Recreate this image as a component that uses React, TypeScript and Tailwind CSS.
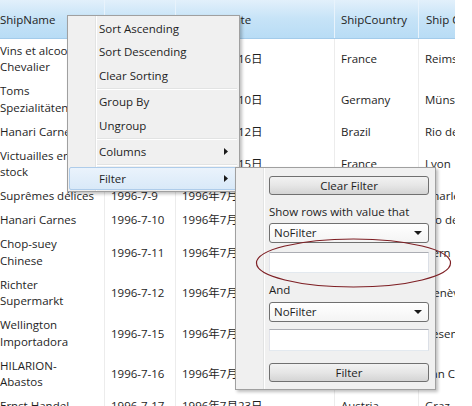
import React from "react";

type Row = {
  name: string[];
  order: string;
  shipped: string;
  country: string;
  city: string;
};

const rows: Row[] = [
  { name: ["Vins et alcools", "Chevalier"], order: "1996-7-4", shipped: "1996年7月16日", country: "France", city: "Reims" },
  { name: ["Toms", "Spezialitäten"], order: "1996-7-5", shipped: "1996年7月10日", country: "Germany", city: "Münster" },
  { name: ["Hanari Carnes"], order: "1996-7-8", shipped: "1996年7月12日", country: "Brazil", city: "Rio de Janeiro" },
  { name: ["Victuailles en", "stock"], order: "1996-7-8", shipped: "1996年7月15日", country: "France", city: "Lyon" },
  { name: ["Suprêmes délices"], order: "1996-7-9", shipped: "1996年7月11日", country: "Belgium", city: "Charleroi" },
  { name: ["Hanari Carnes"], order: "1996-7-10", shipped: "1996年7月16日", country: "Brazil", city: "Rio de Janeiro" },
  { name: ["Chop-suey", "Chinese"], order: "1996-7-11", shipped: "1996年7月23日", country: "Switzerland", city: "Bern" },
  { name: ["Richter", "Supermarkt"], order: "1996-7-12", shipped: "1996年7月15日", country: "Switzerland", city: "Genève" },
  { name: ["Wellington", "Importadora"], order: "1996-7-15", shipped: "1996年7月17日", country: "Brazil", city: "Resende" },
  { name: ["HILARION-", "Abastos"], order: "1996-7-16", shipped: "1996年7月22日", country: "Venezuela", city: "San Cristóbal" },
  { name: ["Ernst Handel"], order: "1996-7-17", shipped: "1996年7月23日", country: "Austria", city: "Graz" },
];

function Arrow() {
  return (
    <svg width="4" height="7" viewBox="0 0 4 7" className="block">
      <path d="M0 0 L4 3.5 L0 7 Z" fill="#1a1a1a" />
    </svg>
  );
}

function DownArrow() {
  return (
    <svg width="8" height="4" viewBox="0 0 8 4" className="block">
      <path d="M0 0 L8 0 L4 4 Z" fill="#1a1a1a" />
    </svg>
  );
}

function MenuItem({ label, sub, active }: { label: string; sub?: boolean; active?: boolean }) {
  return (
    <div className="relative h-[23.5px] flex items-center">
      {active && (
        <div className="absolute left-px right-[2px] top-0 bottom-0 rounded-[2px] border border-[#aeccea] bg-gradient-to-b from-[#eaf3fc] to-[#d9e9f8]" />
      )}
      <div className="relative pl-[31px] flex-1">{label}</div>
      {sub && (
        <div className="relative mr-[11px]">
          <Arrow />
        </div>
      )}
    </div>
  );
}

function Sep() {
  return (
    <div className="h-[3px] flex flex-col justify-center pl-[28px] pr-[2px]">
      <div className="h-px bg-[#e2e3e3]" />
      <div className="h-px bg-white" />
    </div>
  );
}

function Button({ label }: { label: string }) {
  return (
    <div className="h-[19px] rounded-[3px] border border-[#707070] bg-gradient-to-b from-[#f2f2f2] via-[#e6e6e6] to-[#d4d4d4] flex items-center justify-center leading-none">
      {label}
    </div>
  );
}

function Dropdown() {
  return (
    <div className="h-[20px] rounded-[3px] border border-[#707070] bg-gradient-to-b from-[#ffffff] to-[#f4f4f4] flex items-center justify-between pl-[4px] pr-[6px]">
      <span>NoFilter</span>
      <DownArrow />
    </div>
  );
}

export default function App() {
  return (
    <div className="relative w-[472px] h-[406px] overflow-hidden bg-white text-[11.5px] text-[#1e1e1e] font-['Open_Sans','Noto_Sans_CJK_SC',sans-serif]">
      {/* Grid */}
      <div className="w-[455px] h-[406px] overflow-hidden">
        <div className="flex h-[39px] bg-gradient-to-b from-[#e2f0fb] via-[#c6e3f7] to-[#b8dcf5] border-b border-[#a3cbea]">
          <div className="w-[104px] shrink-0 flex items-center pt-px">ShipName</div>
          <div className="w-[71px] shrink-0 flex items-center pt-px pl-[6px] border-l border-[#e8f3fc]">OrderDate</div>
          <div className="w-[159px] shrink-0 flex items-center pt-px pl-[6px] border-l border-[#e8f3fc]">ShippedDate</div>
          <div className="w-[84px] shrink-0 flex items-center pt-px pl-[6px] border-l border-[#e8f3fc]">ShipCountry</div>
          <div className="flex-1 flex items-center pt-px pl-[7px] border-l border-[#e8f3fc] whitespace-nowrap overflow-hidden">Ship City</div>
        </div>
        {rows.map((r, i) => (
          <div key={i} className={`flex ${r.name.length > 1 ? "h-[40.5px]" : "h-[24px]"} leading-[16.5px]`}>
            <div className="w-[104px] shrink-0 flex flex-col justify-center whitespace-nowrap overflow-hidden">
              {r.name.map((n, j) => (
                <div key={j}>{n}</div>
              ))}
            </div>
            <div className="w-[71px] shrink-0 flex items-center pl-[6px] border-l border-[#ececec] whitespace-nowrap">{r.order}</div>
            <div className="w-[159px] shrink-0 flex items-center pl-[6px] border-l border-[#ececec] whitespace-nowrap">{r.shipped}</div>
            <div className="w-[84px] shrink-0 flex items-center pl-[6px] border-l border-[#ececec] whitespace-nowrap">{r.country}</div>
            <div className="flex-1 flex items-center pl-[6px] border-l border-[#ececec] whitespace-nowrap overflow-hidden">{r.city}</div>
          </div>
        ))}
      </div>

      {/* Context menu */}
      <div className="absolute left-[67px] top-[15px] w-[173px] border border-[#a0a0a0] bg-[#f0f0f0] pt-[0.5px] pb-px shadow-[2px_2px_3px_rgba(0,0,0,0.25)]">
        <div className="absolute left-[27px] top-0 bottom-0 w-[2px] flex">
          <div className="w-px bg-[#e2e3e3]" />
          <div className="w-px bg-white" />
        </div>
        <MenuItem label="Sort Ascending" />
        <MenuItem label="Sort Descending" />
        <MenuItem label="Clear Sorting" />
        <Sep />
        <MenuItem label="Group By" />
        <MenuItem label="Ungroup" />
        <Sep />
        <MenuItem label="Columns" sub />
        <Sep />
        <MenuItem label="Filter" sub active />
      </div>

      {/* Filter submenu */}
      <div className="absolute left-[235px] top-[167px] w-[201px] border border-[#a0a0a0] bg-[#f0f0f0] pl-[33px] pr-[6px] pt-[8px] pb-[7px] shadow-[2px_2px_3px_rgba(0,0,0,0.25)]">
        <div className="absolute left-[27px] top-0 bottom-0 w-[2px] flex">
          <div className="w-px bg-[#e2e3e3]" />
          <div className="w-px bg-white" />
        </div>
        <Button label="Clear Filter" />
        <div className="mt-[9px] h-[16px] leading-[16px]">Show rows with value that</div>
        <div className="mt-[3px]">
          <Dropdown />
        </div>
        <div className="mt-[9px] h-[21px] border border-[#abadb3] border-b-[#e3e9ef] border-r-[#dbdfe6] border-l-[#e2e3ea] bg-white" />
        <div className="mt-[9px] h-[16px] leading-[16px]">And</div>
        <div className="mt-[4px]">
          <Dropdown />
        </div>
        <div className="mt-[7px] h-[22px] border border-[#abadb3] border-b-[#e3e9ef] border-r-[#dbdfe6] border-l-[#e2e3ea] bg-white" />
        <div className="mt-[12px]">
          <Button label="Filter" />
        </div>
      </div>

      {/* Annotation ellipse */}
      <svg className="absolute left-[254px] top-[236px]" width="199" height="54" viewBox="0 0 199 54">
        <ellipse cx="99.5" cy="27" rx="97" ry="24" fill="none" stroke="#7e1f24" strokeWidth="1.2" />
      </svg>
    </div>
  );
}
